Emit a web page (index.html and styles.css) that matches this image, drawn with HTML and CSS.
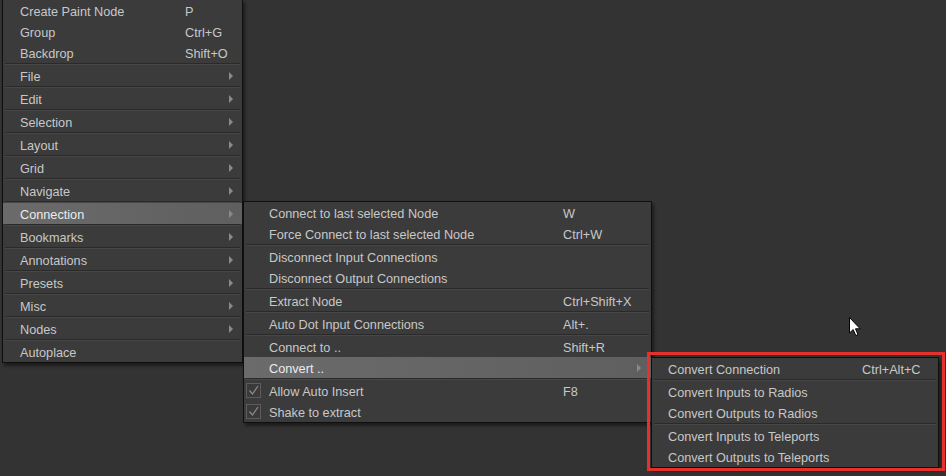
FILE: index.html
```html
<!DOCTYPE html>
<html lang="en">
<head>
  <meta charset="UTF-8">
  <title>Node Graph Menu</title>
  <link rel="stylesheet" href="styles.css">
</head>
<body>
  <div class="canvas">

    <div class="menu menu-main">
      <div class="item"><span class="lead"></span><span class="label">Create Paint Node</span><span class="key">P</span></div>
      <div class="item"><span class="lead"></span><span class="label">Group</span><span class="key">Ctrl+G</span></div>
      <div class="item"><span class="lead"></span><span class="label">Backdrop</span><span class="key">Shift+O</span></div>
      <div class="sep"></div>
      <div class="item"><span class="lead"></span><span class="label">File</span><span class="key"></span><span class="arrow"></span></div>
      <div class="sep"></div>
      <div class="item"><span class="lead"></span><span class="label">Edit</span><span class="key"></span><span class="arrow"></span></div>
      <div class="sep"></div>
      <div class="item"><span class="lead"></span><span class="label">Selection</span><span class="key"></span><span class="arrow"></span></div>
      <div class="sep"></div>
      <div class="item"><span class="lead"></span><span class="label">Layout</span><span class="key"></span><span class="arrow"></span></div>
      <div class="sep"></div>
      <div class="item"><span class="lead"></span><span class="label">Grid</span><span class="key"></span><span class="arrow"></span></div>
      <div class="sep"></div>
      <div class="item"><span class="lead"></span><span class="label">Navigate</span><span class="key"></span><span class="arrow"></span></div>
      <div class="sep"></div>
      <div class="item active"><span class="lead"></span><span class="label">Connection</span><span class="key"></span><span class="arrow"></span></div>
      <div class="sep"></div>
      <div class="item"><span class="lead"></span><span class="label">Bookmarks</span><span class="key"></span><span class="arrow"></span></div>
      <div class="sep"></div>
      <div class="item"><span class="lead"></span><span class="label">Annotations</span><span class="key"></span><span class="arrow"></span></div>
      <div class="sep"></div>
      <div class="item"><span class="lead"></span><span class="label">Presets</span><span class="key"></span><span class="arrow"></span></div>
      <div class="sep"></div>
      <div class="item"><span class="lead"></span><span class="label">Misc</span><span class="key"></span><span class="arrow"></span></div>
      <div class="sep"></div>
      <div class="item"><span class="lead"></span><span class="label">Nodes</span><span class="key"></span><span class="arrow"></span></div>
      <div class="sep"></div>
      <div class="item"><span class="lead"></span><span class="label">Autoplace</span></div>
    </div>

    <div class="menu menu-conn">
      <div class="item"><span class="lead"></span><span class="label">Connect to last selected Node</span><span class="key">W</span></div>
      <div class="item"><span class="lead"></span><span class="label">Force Connect to last selected Node</span><span class="key">Ctrl+W</span></div>
      <div class="sep"></div>
      <div class="item"><span class="lead"></span><span class="label">Disconnect Input Connections</span></div>
      <div class="item"><span class="lead"></span><span class="label">Disconnect Output Connections</span></div>
      <div class="sep"></div>
      <div class="item"><span class="lead"></span><span class="label">Extract Node</span><span class="key">Ctrl+Shift+X</span></div>
      <div class="sep"></div>
      <div class="item"><span class="lead"></span><span class="label">Auto Dot Input Connections</span><span class="key">Alt+.</span></div>
      <div class="sep"></div>
      <div class="item"><span class="lead"></span><span class="label">Connect to ..</span><span class="key">Shift+R</span></div>
      <div class="item active"><span class="lead"></span><span class="label">Convert ..</span><span class="key"></span><span class="arrow"></span></div>
      <div class="sep"></div>
      <div class="item">
        <span class="lead">
          <span class="check"><svg width="13" height="13" viewBox="0 0 13 13"><path d="M2.5 6.5 L5.5 10 L11 2" fill="none" stroke="#8c8c8c" stroke-width="1.2"/></svg></span>
        </span>
        <span class="label">Allow Auto Insert</span><span class="key">F8</span>
      </div>
      <div class="item">
        <span class="lead">
          <span class="check"><svg width="13" height="13" viewBox="0 0 13 13"><path d="M2.5 6.5 L5.5 10 L11 2" fill="none" stroke="#8c8c8c" stroke-width="1.2"/></svg></span>
        </span>
        <span class="label">Shake to extract</span>
      </div>
    </div>

    <div class="menu menu-convert">
      <div class="item"><span class="lead"></span><span class="label">Convert Connection</span><span class="key">Ctrl+Alt+C</span></div>
      <div class="sep"></div>
      <div class="item"><span class="lead"></span><span class="label">Convert Inputs to Radios</span></div>
      <div class="item"><span class="lead"></span><span class="label">Convert Outputs to Radios</span></div>
      <div class="sep"></div>
      <div class="item"><span class="lead"></span><span class="label">Convert Inputs to Teleports</span></div>
      <div class="item"><span class="lead"></span><span class="label">Convert Outputs to Teleports</span></div>
    </div>

    <div class="highlight-box"></div>

    <svg class="cursor" width="13" height="20" viewBox="0 0 13 20">
      <path d="M0.5 0.5 L0.5 16 L4.2 12.6 L6.8 18.6 L9 17.6 L6.5 11.8 L11.2 11.8 Z" fill="#ffffff" stroke="#000000" stroke-width="1"/>
    </svg>

  </div>
</body>
</html>
```

FILE: styles.css
```css
:root {
  --canvas: #333333;
  --menu: #3b3b3b;
  --menu-border: #0f0f0f;
  --text: #c8c8c8;
  --text-active: #ececec;
  --sep-dark: #2a2a2a;
  --sep-light: #474747;
  --arrow: #8a8a8a;
  --mark: #e5312c;
}

body {
  margin: 0;
  background-color: var(--canvas);
  font-family: "Liberation Sans", Arial, sans-serif;
  font-size: 12.7px;
  color: var(--text);
}

.canvas {
  position: relative;
  width: 946px;
  height: 476px;
  overflow: hidden;
}

/* popup menus */
.menu {
  position: absolute;
  background-color: var(--menu);
  border: 1px solid var(--menu-border);
  box-shadow: 2px 3px 3px rgba(0, 0, 0, 0.45);
}

.menu-main {
  left: 2px;
  top: -1px;
  width: 239px;
}

.menu-conn {
  left: 243px;
  top: 201px;
  width: 407px;
}

.menu-convert {
  left: 651px;
  top: 357px;
  width: 286px;
}

.item {
  display: flex;
  align-items: center;
  box-sizing: border-box;
  height: 21px;
  padding-top: 2px;
  white-space: nowrap;
}

.lead {
  flex: none;
  display: flex;
  align-items: center;
}

.label {
  flex: none;
}

.key {
  flex: 1;
}

.menu-main .lead { width: 17px; }
.menu-main .label { width: 165px; }
.menu-main .arrow { margin-right: 9px; }

.menu-conn .lead { width: 25px; }
.menu-conn .label { width: 294px; }
.menu-conn .arrow { margin-right: 10px; }

.menu-convert .lead { width: 16px; }
.menu-convert .label { width: 194px; }

.arrow {
  flex: none;
  width: 0;
  height: 0;
  margin-top: -2px;
  border-left: 4px solid var(--arrow);
  border-top: 4px solid transparent;
  border-bottom: 4px solid transparent;
}

.item.active {
  background: linear-gradient(to right, #6b6b6b, #5f5f5f);
  color: var(--text-active);
}

.sep {
  border-top: 1px solid var(--sep-dark);
  border-bottom: 1px solid var(--sep-light);
  margin: 0 2px;
}

.check {
  display: flex;
  align-items: center;
  justify-content: center;
  width: 13px;
  height: 13px;
  margin-left: 2px;
  margin-top: -2px;
  border: 1px solid #5c5c5c;
  background-color: #3a3a3a;
}

/* annotation frame around the last submenu */
.highlight-box {
  position: absolute;
  left: 647px;
  top: 352px;
  width: 292px;
  height: 113px;
  border: 3px solid var(--mark);
}

.cursor {
  position: absolute;
  left: 849px;
  top: 317px;
}
```
